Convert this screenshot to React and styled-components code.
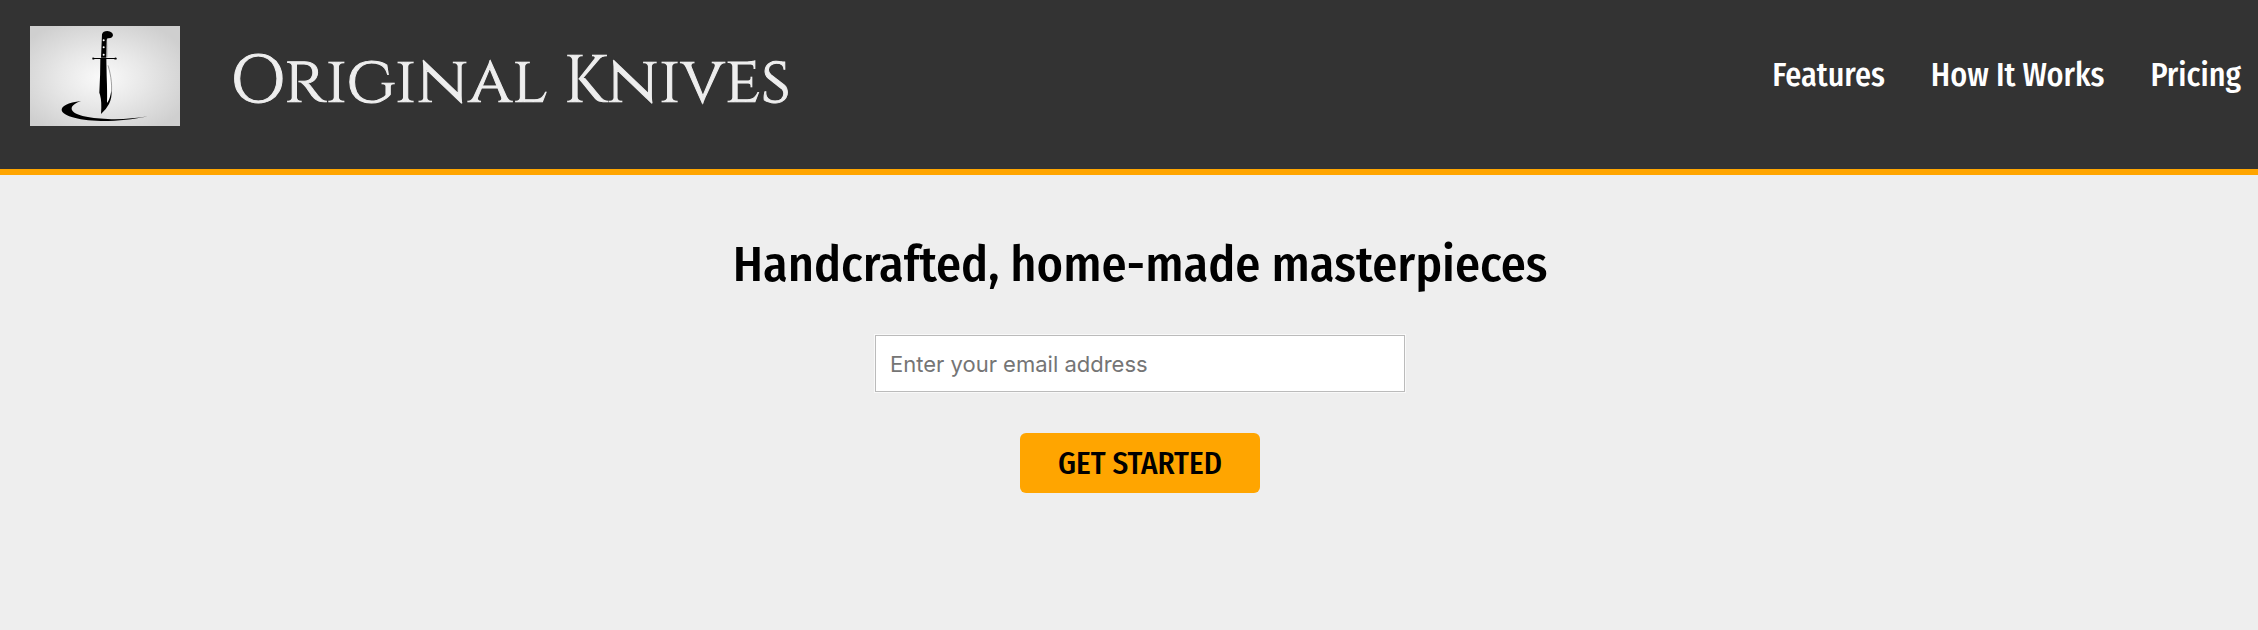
import React from "react";
import styled, { createGlobalStyle } from "styled-components";

const GlobalStyle = createGlobalStyle`
  *, *::before, *::after { box-sizing: border-box; }
  body {
    margin: 0;
    background: #eee;
    color: #000;
    font-family: "Fira Sans Condensed", "Roboto Condensed", "Open Sans", sans-serif;
  }
`;

const Header = styled.header`
  display: flex;
  align-items: flex-start;
  justify-content: space-between;
  padding: 26px 17px 43px 30px;
  background: #333;
  border-bottom: 6px solid orange;
`;

const Brand = styled.div`
  display: flex;
  align-items: flex-start;
  gap: 50px;
`;

const LogoImage = styled.svg`
  display: block;
  width: 150px;
  height: 100px;
  flex: none;
`;

const BrandName = styled.h1`
  margin: 0;
  padding-top: 14px;
  color: #eee;
  font-family: "Cinzel", "Liberation Serif", serif;
  font-size: 66px;
  font-weight: 400;
  line-height: 86px;
  white-space: nowrap;
  -webkit-text-stroke: 1px #eee;
`;

const Nav = styled.nav`
  display: flex;
  gap: 46px;
  padding-top: 29px;
`;

const NavLink = styled.a`
  color: #fff;
  font-size: 32px;
  font-weight: 500;
  line-height: 40px;
  text-decoration: none;
  white-space: nowrap;
`;

const Hero = styled.main`
  display: flex;
  flex-direction: column;
  align-items: center;
  padding: 57px 0 120px 22px;
`;

const Tagline = styled.h2`
  margin: 0 0 39px;
  font-size: 50px;
  font-weight: 500;
  line-height: 64px;
  text-align: center;
`;

const SignupForm = styled.form`
  display: flex;
  flex-direction: column;
  align-items: center;
  gap: 41px;
`;

const EmailInput = styled.input`
  width: 530px;
  height: 57px;
  margin: 0;
  padding: 0 14px;
  border: 1px solid #bbb;
  border-radius: 0;
  outline: 1px solid #f9f9f9;
  background: #fff;
  color: #000;
  font-family: Inter, "Liberation Sans", sans-serif;
  font-size: 22px;

  &::placeholder {
    color: #757575;
    opacity: 1;
  }
`;

const SubmitButton = styled.button`
  width: 240px;
  height: 60px;
  padding: 2px 0 0;
  border: 0;
  border-radius: 6px;
  background: orange;
  color: #000;
  font-family: inherit;
  font-size: 31px;
  font-weight: 500;
  line-height: 40px;
  text-transform: uppercase;
  cursor: pointer;
`;

function Logo() {
  return (
    <LogoImage viewBox="0 0 450 300" role="img" aria-label="Original Knives logo">
      <defs>
        <radialGradient id="plate" cx="48%" cy="52%" r="62%">
          <stop offset="0" stopColor="#fafafa" />
          <stop offset="0.45" stopColor="#e8e8e8" />
          <stop offset="1" stopColor="#cfcfcf" />
        </radialGradient>
      </defs>
      <rect width="450" height="300" fill="url(#plate)" />
      <path d="M230 38Q235 65 232 94" fill="none" stroke="#bbb" strokeWidth="2" />
      <path d="M229 101C236 130 247 172 243 204C240 222 237 229 230 235Z" fill="#fff" />
      <path d="M234 118C244 150 248 185 242 216" fill="none" stroke="#777" strokeWidth="2" />
      <path d="M213 95L216 25Q219 15 232 15Q249 17 249 28Q247 38 234 37Q230 37 230 43L229 95Z" />
      <path d="M187 95Q190 94 194 96L253 96Q257 93 260 96V100Q256 102 252 99L194 99Q190 102 187 100Z" />
      <path d="M211 98H229L230 150Q232 200 231 231Q240 220 244 195Q246 216 237 234Q229 250 213 264Q216 228 210 206L208 200Q211 145 211 98Z" />
      <g fill="#fff">
        <circle cx="221" cy="43" r="3" />
        <circle cx="221" cy="64" r="3" />
        <circle cx="221" cy="86" r="3" />
      </g>
      <path d="M153 225C113 230 94 241 95 252C97 271 155 286 235 285C286 284 325 277 354 271C316 277 274 281 233 279C175 277 127 267 125 249C124 239 137 231 153 225Z" />
    </LogoImage>
  );
}

const links = [
  { label: "Features", href: "#features" },
  { label: "How It Works", href: "#how-it-works" },
  { label: "Pricing", href: "#pricing" },
];

export default function App() {
  return (
    <>
      <GlobalStyle />
      <Header>
        <Brand>
          <Logo />
          <BrandName>Original Knives</BrandName>
        </Brand>
        <Nav>
          {links.map(({ label, href }) => (
            <NavLink key={href} href={href}>{label}</NavLink>
          ))}
        </Nav>
      </Header>
      <Hero>
        <Tagline>Handcrafted, home-made masterpieces</Tagline>
        <SignupForm onSubmit={(event) => event.preventDefault()}>
          <EmailInput
            type="email"
            name="email"
            aria-label="Email address"
            placeholder="Enter your email address"
          />
          <SubmitButton type="submit">Get Started</SubmitButton>
        </SignupForm>
      </Hero>
    </>
  );
}
